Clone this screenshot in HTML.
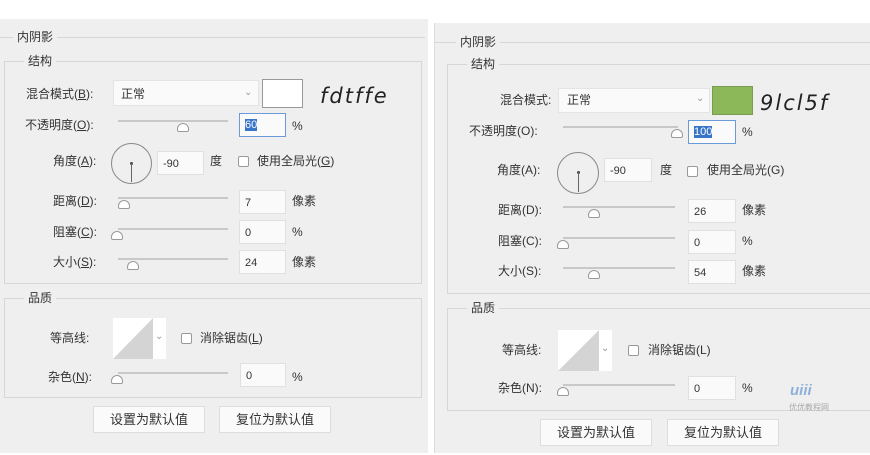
<!DOCTYPE html><html><head><meta charset="utf-8"><style>
body{margin:0;width:870px;height:455px;background:#fff;position:relative;overflow:hidden;font-family:"Liberation Sans","Noto Sans CJK SC",sans-serif;font-size:12px;color:#333}
div,span{position:absolute;box-sizing:border-box}
.p{background:#efefef}
.t{white-space:nowrap;line-height:14px}
.bx{border:1px solid #d6d6d6}
.ln{height:1px;background:#d6d6d6}
.sl{height:2px;background:#c8c8c8}
.th{width:0;height:0}
.th::before{content:"";position:absolute;left:-6px;top:0;width:12px;height:9px;background:#fff;border:1px solid #999;border-radius:6px 6px 2px 2px;box-sizing:border-box}
.in{background:#fafafa;border:1px solid #e0e0e0;height:24px;padding:6px 0 0 5px;font-size:11px;line-height:12px}
.cb{width:11px;height:11px;border:1px solid #999;background:#fff;border-radius:2px}
.btn{background:#fafafa;border:1px solid #ddd;height:27px;width:112px;text-align:center;line-height:25px;font-size:13px}
.hw{font-family:"DejaVu Sans",sans-serif;font-style:italic;font-size:21px;color:#222;letter-spacing:2px}
</style></head><body>
<div class="p" style="left:0;top:19px;width:428px;height:434px"></div>
<div class="p" style="left:434px;top:23px;width:436px;height:430px"></div>
<div style="left:434px;top:23px;width:1px;height:430px;background:#ddd"></div>

<!-- LEFT -->
<div class="ln" style="left:0;top:37px;width:425px"></div>
<span class="t p" style="left:13px;top:30px;padding:0 4px">内阴影</span>
<div class="bx" style="left:4px;top:61px;width:418px;height:223px"></div>
<span class="t p" style="left:24px;top:54px;padding:0 4px">结构</span>
<span class="t" style="left:26px;top:87px">混合模式(<u>B</u>):</span>
<div style="left:113px;top:80px;width:146px;height:26px;background:#fafafa;border:1px solid #e4e4e4"></div>
<span class="t" style="left:121px;top:87px">正常</span>
<span class="t" style="left:244px;top:86px;color:#999;font-size:10px">⌄</span>
<div style="left:262px;top:79px;width:41px;height:29px;background:#fff;border:1px solid #999"></div>
<span class="t hw" style="left:320px;top:86px;line-height:20px">fdtffe</span>
<span class="t" style="left:25px;top:118px">不透明度(<u>O</u>):</span>
<div class="sl" style="left:118px;top:120px;width:110px"></div><div class="th" style="left:183px;top:123px"></div>
<div class="in" style="left:239px;top:113px;width:47px;border-color:#6a9ad8;padding-top:5px"><span style="position:static;background:#3874c8;color:#fff">60</span></div>
<span class="t" style="left:292px;top:119px">%</span>
<span class="t" style="left:53px;top:154px">角度(<u>A</u>):</span>
<div style="left:111px;top:143px;width:41px;height:41px;border:1px solid #888;border-radius:50%"></div>
<div style="left:130px;top:162px;width:3px;height:3px;background:#444;border-radius:50%"></div>
<div style="left:131px;top:163px;width:1px;height:19px;background:#666"></div>
<div class="in" style="left:157px;top:151px;width:47px">-90</div>
<span class="t" style="left:210px;top:154px">度</span>
<div class="cb" style="left:238px;top:156px"></div>
<span class="t" style="left:257px;top:154px">使用全局光(<u>G</u>)</span>
<span class="t" style="left:53px;top:194px">距离(<u>D</u>):</span>
<div class="sl" style="left:118px;top:197px;width:110px"></div><div class="th" style="left:124px;top:200px"></div>
<div class="in" style="left:239px;top:190px;width:47px">7</div>
<span class="t" style="left:292px;top:194px">像素</span>
<span class="t" style="left:53px;top:225px">阻塞(<u>C</u>):</span>
<div class="sl" style="left:118px;top:228px;width:110px"></div><div class="th" style="left:117px;top:231px"></div>
<div class="in" style="left:239px;top:220px;width:47px">0</div>
<span class="t" style="left:292px;top:225px">%</span>
<span class="t" style="left:53px;top:255px">大小(<u>S</u>):</span>
<div class="sl" style="left:118px;top:258px;width:110px"></div><div class="th" style="left:133px;top:261px"></div>
<div class="in" style="left:239px;top:250px;width:47px">24</div>
<span class="t" style="left:292px;top:255px">像素</span>
<div class="bx" style="left:4px;top:298px;width:418px;height:100px"></div>
<span class="t p" style="left:24px;top:291px;padding:0 4px">品质</span>
<span class="t" style="left:50px;top:331px">等高线:</span>
<div style="left:113px;top:318px;width:53px;height:41px;background:#fff"></div>
<svg style="position:absolute;left:113px;top:318px" width="40" height="41"><polygon points="0,41 40,0 40,41" fill="#d4d4d4"/></svg>
<span class="t" style="left:155px;top:330px;color:#999;font-size:10px">⌄</span>
<div class="cb" style="left:181px;top:333px"></div>
<span class="t" style="left:200px;top:331px">消除锯齿(<u>L</u>)</span>
<span class="t" style="left:48px;top:370px">杂色(<u>N</u>):</span>
<div class="sl" style="left:118px;top:372px;width:110px"></div><div class="th" style="left:117px;top:375px"></div>
<div class="in" style="left:240px;top:363px;width:46px">0</div>
<span class="t" style="left:292px;top:370px">%</span>
<div class="btn" style="left:93px;top:406px">设置为默认值</div>
<div class="btn" style="left:219px;top:406px">复位为默认值</div>

<!-- RIGHT -->
<div class="ln" style="left:435px;top:42px;width:435px"></div>
<span class="t p" style="left:456px;top:35px;padding:0 4px">内阴影</span>
<div class="bx" style="left:447px;top:64px;width:430px;height:230px"></div>
<span class="t p" style="left:467px;top:57px;padding:0 4px">结构</span>
<span class="t" style="left:500px;top:93px">混合模式:</span>
<div style="left:558px;top:88px;width:152px;height:25px;background:#fafafa;border:1px solid #e4e4e4"></div>
<span class="t" style="left:567px;top:93px">正常</span>
<span class="t" style="left:696px;top:92px;color:#999;font-size:10px">⌄</span>
<div style="left:712px;top:86px;width:41px;height:29px;background:#8db85a;border:1px solid #7a9c50"></div>
<span class="t hw" style="left:760px;top:93px;line-height:20px">9lcl5f</span>
<span class="t" style="left:469px;top:124px">不透明度(O):</span>
<div class="sl" style="left:563px;top:126px;width:115px"></div><div class="th" style="left:677px;top:129px"></div>
<div class="in" style="left:688px;top:120px;width:48px;border-color:#6a9ad8;padding-top:5px"><span style="position:static;background:#3874c8;color:#fff">100</span></div>
<span class="t" style="left:742px;top:125px">%</span>
<span class="t" style="left:497px;top:163px">角度(A):</span>
<div style="left:557px;top:152px;width:42px;height:42px;border:1px solid #888;border-radius:50%"></div>
<div style="left:577px;top:171px;width:3px;height:3px;background:#444;border-radius:50%"></div>
<div style="left:578px;top:172px;width:1px;height:20px;background:#666"></div>
<div class="in" style="left:604px;top:158px;width:48px">-90</div>
<span class="t" style="left:660px;top:163px">度</span>
<div class="cb" style="left:687px;top:166px"></div>
<span class="t" style="left:707px;top:163px">使用全局光(G)</span>
<span class="t" style="left:498px;top:203px">距离(D):</span>
<div class="sl" style="left:563px;top:206px;width:112px"></div><div class="th" style="left:594px;top:209px"></div>
<div class="in" style="left:688px;top:199px;width:48px">26</div>
<span class="t" style="left:742px;top:203px">像素</span>
<span class="t" style="left:498px;top:234px">阻塞(C):</span>
<div class="sl" style="left:563px;top:237px;width:112px"></div><div class="th" style="left:563px;top:240px"></div>
<div class="in" style="left:688px;top:230px;width:48px">0</div>
<span class="t" style="left:742px;top:234px">%</span>
<span class="t" style="left:498px;top:264px">大小(S):</span>
<div class="sl" style="left:563px;top:267px;width:112px"></div><div class="th" style="left:594px;top:270px"></div>
<div class="in" style="left:688px;top:260px;width:48px">54</div>
<span class="t" style="left:742px;top:264px">像素</span>
<div class="bx" style="left:447px;top:308px;width:430px;height:103px"></div>
<span class="t p" style="left:467px;top:301px;padding:0 4px">品质</span>
<span class="t" style="left:502px;top:343px">等高线:</span>
<div style="left:558px;top:330px;width:54px;height:41px;background:#fff"></div>
<svg style="position:absolute;left:558px;top:330px" width="41" height="41"><polygon points="0,41 41,0 41,41" fill="#d4d4d4"/></svg>
<span class="t" style="left:601px;top:342px;color:#999;font-size:10px">⌄</span>
<div class="cb" style="left:628px;top:345px"></div>
<span class="t" style="left:648px;top:343px">消除锯齿(L)</span>
<span class="t" style="left:498px;top:381px">杂色(N):</span>
<div class="sl" style="left:563px;top:384px;width:112px"></div><div class="th" style="left:563px;top:387px"></div>
<div class="in" style="left:688px;top:376px;width:48px">0</div>
<span class="t" style="left:742px;top:381px">%</span>
<span class="t" style="left:790px;top:384px;font-size:15px;font-weight:bold;font-style:italic;color:#8fb0d8">uiii</span>
<span class="t" style="left:789px;top:401px;font-size:8px;color:#aaa">优优教程网</span>
<div class="btn" style="left:540px;top:419px">设置为默认值</div>
<div class="btn" style="left:667px;top:419px">复位为默认值</div>
</body></html>
